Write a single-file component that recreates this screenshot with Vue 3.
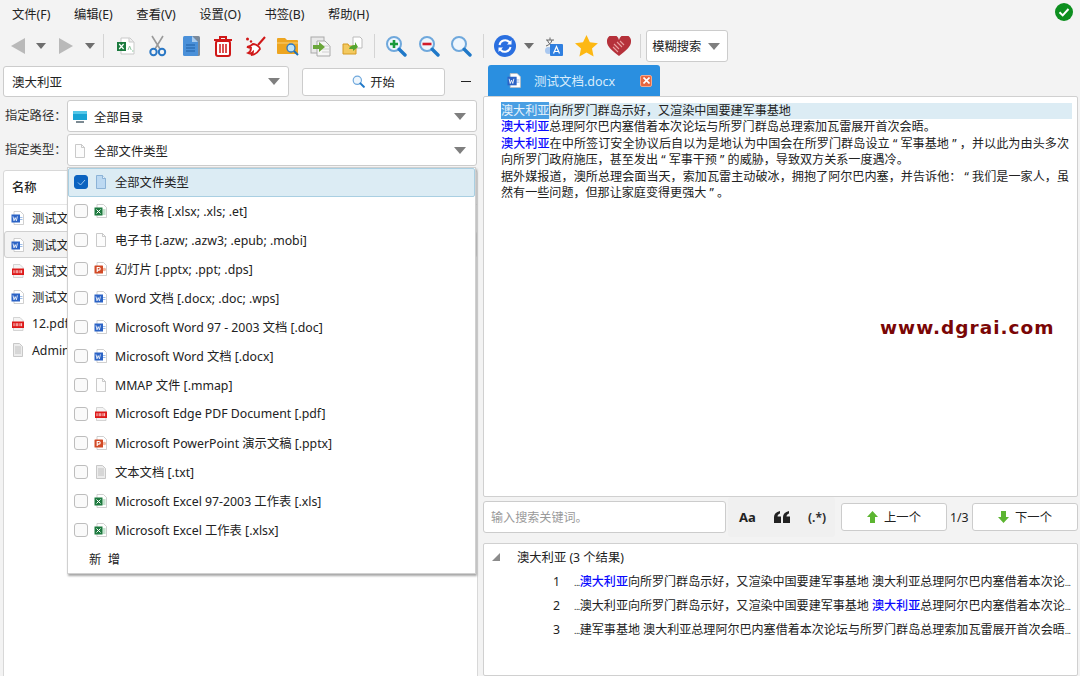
<script setup>
const menus = ['文件(F)', '编辑(E)', '查看(V)', '设置(O)', '书签(B)', '帮助(H)']

const files = [
  { name: '测试文档.docx', icon: 'word' },
  { name: '测试文档.docx', icon: 'word', active: true },
  { name: '测试文档.pdf', icon: 'pdf' },
  { name: '测试文档.docx', icon: 'word' },
  { name: '12.pdf', icon: 'pdf' },
  { name: 'Administrator.txt', icon: 'text' }
]

const types = [
  { name: '全部文件类型', icon: 'blue', checked: true },
  { name: '电子表格 [.xlsx; .xls; .et]', icon: 'excel' },
  { name: '电子书 [.azw; .azw3; .epub; .mobi]', icon: 'blank' },
  { name: '幻灯片 [.pptx; .ppt; .dps]', icon: 'ppt' },
  { name: 'Word 文档 [.docx; .doc; .wps]', icon: 'word' },
  { name: 'Microsoft Word 97 - 2003 文档 [.doc]', icon: 'word' },
  { name: 'Microsoft Word 文档 [.docx]', icon: 'word' },
  { name: 'MMAP 文件 [.mmap]', icon: 'blank' },
  { name: 'Microsoft Edge PDF Document [.pdf]', icon: 'pdf' },
  { name: 'Microsoft PowerPoint 演示文稿 [.pptx]', icon: 'ppt' },
  { name: '文本文档 [.txt]', icon: 'text' },
  { name: 'Microsoft Excel 97-2003 工作表 [.xls]', icon: 'excel' },
  { name: 'Microsoft Excel 工作表 [.xlsx]', icon: 'excel' }
]

const results = [
  { n: 1, pre: '', hit: '澳大利亚', post: '向所罗门群岛示好，又渲染中国要建军事基地 澳大利亚总理阿尔巴内塞借着本次论' },
  { n: 2, pre: '澳大利亚向所罗门群岛示好，又渲染中国要建军事基地 ', hit: '澳大利亚', post: '总理阿尔巴内塞借着本次论' },
  { n: 3, pre: '建军事基地 澳大利亚总理阿尔巴内塞借着本次论坛与所罗门群岛总理索加瓦雷展开首次会晤', hit: '', post: '' }
]
</script>

<template>
  <div class="app">
    <svg class="defs" width="0" height="0">
      <symbol id="f-word" viewBox="0 0 14 14">
        <path d="M3 .5h6.5L12.5 3.5v10H3z" fill="#fff" stroke="#bbb" stroke-width=".7" />
        <rect x="8" y="6" width="3.500" height="1" fill="#9dbde8" /><rect x="8" y="8" width="3.500" height="1" fill="#9dbde8" />
        <rect x=".5" y="3.500" width="8.500" height="8" fill="#2b63c6" />
        <path d="M2 5.400l1 4.400 1.200-3.200 1.200 3.200 1-4.400" fill="none" stroke="#fff" stroke-width=".8" />
      </symbol>
      <symbol id="f-excel" viewBox="0 0 14 14">
        <path d="M3 .5h6.500L12.500 3.500v10H3z" fill="#fff" stroke="#bbb" stroke-width=".7" />
        <rect x="8.500" y="5.500" width="3" height="1" fill="#8cc79f" /><rect x="8.500" y="7.500" width="3" height="1" fill="#8cc79f" /><rect x="8.500" y="9.500" width="3" height="1" fill="#8cc79f" />
        <rect x=".5" y="3.500" width="8" height="8" fill="#1d7a3f" />
        <path d="M2.500 5.500l4 4M6.500 5.500l-4 4" stroke="#fff" stroke-width="1" />
      </symbol>
      <symbol id="f-ppt" viewBox="0 0 14 14">
        <path d="M3 .5h6.500L12.500 3.500v10H3z" fill="#fff" stroke="#bbb" stroke-width=".7" />
        <circle cx="10.300" cy="7.500" r="1.800" fill="#f0b9a4" />
        <rect x=".5" y="3.500" width="8.500" height="8" rx=".6" fill="#d24a26" />
        <path d="M3.200 10V5.500h1.700a1.300 1.300 0 010 2.600H3.200" fill="none" stroke="#fff" stroke-width="1.100" />
      </symbol>
      <symbol id="f-pdf" viewBox="0 0 14 14">
        <path d="M2.500.5h6.500L12 3.500v10H2.500z" fill="#f4f4f4" stroke="#c4c4c4" stroke-width=".7" />
        <rect x="1" y="4.500" width="12" height="6.500" fill="#dd1a1a" />
        <path d="M3 6.200v3M5.200 6.200v3M6.800 6.200v3M9 6.200v3M10.600 6.200v3" stroke="#fbd5d5" stroke-width="1" />
      </symbol>
      <symbol id="f-blank" viewBox="0 0 14 14">
        <path d="M2.500.5h6L11.500 3.500v10h-9z" fill="#fcfcfc" stroke="#bdbdbd" stroke-width=".8" />
        <path d="M8.500.5v3h3" fill="none" stroke="#bdbdbd" stroke-width=".8" />
      </symbol>
      <symbol id="f-blue" viewBox="0 0 14 14">
        <path d="M2.500.5h6L11.500 3.500v10h-9z" fill="#bcd9f2" stroke="#7ba7cf" stroke-width=".8" />
        <path d="M8.500.5v3h3" fill="#e6f1fa" stroke="#7ba7cf" stroke-width=".8" />
      </symbol>
      <symbol id="f-text" viewBox="0 0 14 14">
        <path d="M2.500.5h6L11.500 3.500v10h-9z" fill="#ececec" stroke="#bdbdbd" stroke-width=".8" />
        <path d="M4 4h6M4 6h6M4 8h6M4 10h6" stroke="#bdbdbd" stroke-width=".9" />
      </symbol>
      <symbol id="mag" viewBox="0 0 22 22">
        <circle cx="9" cy="9" r="7" fill="#eef6fd" stroke="#6fa8dc" stroke-width="2" />
        <path d="M14.200 14.200L20 20" stroke="#1f78c8" stroke-width="3.400" stroke-linecap="round" />
      </symbol>
    </svg>

    <header class="menubar">
      <span v-for="m in menus" :key="m">{{ m }}</span>
      <svg class="ok" width="18" height="18" viewBox="0 0 18 18">
        <circle cx="9" cy="9" r="9" fill="#0d8f1f" />
        <path d="M4.500 9.200l3.200 3.200 5.800-6.400" fill="none" stroke="#fff" stroke-width="2" />
      </svg>
    </header>

    <div class="toolbar">
      <span class="tool nav"><i class="tri-left"></i></span>
      <span class="tool drop"><i class="caret"></i></span>
      <span class="tool nav wide"><i class="tri-right"></i></span>
      <span class="tool drop"><i class="caret"></i></span>
      <i class="sep first"></i>

      <span class="tool">
        <svg width="20" height="20" viewBox="0 0 20 20">
          <path d="M5 2h9l4 4v12H5z" fill="#fff" stroke="#c9c9c9" />
          <path d="M13 2v4h5" fill="#eee" stroke="#c9c9c9" />
          <rect x="1" y="6" width="9" height="9" fill="#1b7a3e" />
          <path d="M3.200 8l4.400 5M7.600 8l-4.400 5" stroke="#fff" stroke-width="1.200" />
          <path d="M12 14l1.600-4 1.600 4M16 15h1.500" fill="none" stroke="#8cc79f" />
        </svg>
      </span>
      <span class="tool">
        <svg width="18" height="22" viewBox="0 0 18 22">
          <path d="M3 1l8 13M14 1L6 14" stroke="#9a9a9a" stroke-width="1.600" />
          <circle cx="4.500" cy="17" r="3.200" fill="none" stroke="#2b78c5" stroke-width="2" />
          <circle cx="13" cy="17" r="3.200" fill="none" stroke="#2b78c5" stroke-width="2" />
        </svg>
      </span>
      <span class="tool">
        <svg width="20" height="22" viewBox="0 0 20 22">
          <rect x="4" y="1" width="15" height="20" rx="1.500" fill="#7b8a9a" />
          <path d="M2 2.500a1.500 1.500 0 011.500-1.500H11l6 6v12.500a1.500 1.500 0 01-1.500 1.500h-12A1.500 1.500 0 012 19.500z" fill="#4a90d9" />
          <path d="M11 1v6h6z" fill="#a8cbee" />
          <path d="M5 10h9M5 13h9M5 16h9" stroke="#1f5fa5" />
        </svg>
      </span>
      <span class="tool">
        <svg width="20" height="22" viewBox="0 0 20 22">
          <path d="M1 5h18M7 5V2h6v3" fill="none" stroke="#d01818" stroke-width="2" />
          <rect x="3" y="6" width="14" height="15" rx="2" fill="#fff" stroke="#d01818" stroke-width="2" />
          <path d="M7 9v9M10 9v9M13 9v9" stroke="#d01818" stroke-width="1.500" />
        </svg>
      </span>
      <span class="tool">
        <svg width="22" height="22" viewBox="0 0 22 22">
          <path d="M20 2l-7 8" stroke="#d01818" stroke-width="2" />
          <path d="M8 9c3 0 7 3 7 5-2 3-5 6-9 6 2-1 2-2 2-3-1 1-3 2-5 1 2-1 3-3 3-5-1 0-2 0-4-1 3 0 5-2 6-3z" fill="#fff" stroke="#d01818" stroke-width="1.800" />
          <circle cx="2.500" cy="4" r="1.500" fill="#d01818" /><circle cx="6" cy="6.500" r="1.200" fill="#d01818" />
        </svg>
      </span>
      <span class="tool">
        <svg width="22" height="20" viewBox="0 0 22 20">
          <path d="M0 3a1 1 0 011-1h7l2 2h10a1 1 0 011 1v12a1 1 0 01-1 1H1a1 1 0 01-1-1z" fill="#eda520" />
          <path d="M0 7h21" stroke="#fad27a" />
          <circle cx="14" cy="12" r="4" fill="#bfe4f7" stroke="#2b78c5" stroke-width="1.300" />
          <path d="M17 15l4 4" stroke="#1f6fb5" stroke-width="2" />
        </svg>
      </span>
      <span class="tool">
        <svg width="21" height="21" viewBox="0 0 21 21">
          <rect x="1" y="1" width="13" height="16" fill="#e9e9e9" stroke="#a9a9a9" />
          <path d="M7 5h8l5 5v10H7z" fill="#f6f6f6" stroke="#a9a9a9" />
          <path d="M12 10h8M12 13h8M12 16h8" stroke="#d0d0d0" />
          <path d="M3 9h6V6l6 5-6 5v-3H3z" fill="#6aa63a" />
        </svg>
      </span>
      <span class="tool">
        <svg width="21" height="20" viewBox="0 0 21 20">
          <path d="M11 1h7l2 2v9h-9z" fill="#fff" stroke="#bbb" />
          <path d="M1 8h5l1 2h7v8H1z" fill="#f3c95f" stroke="#d49a22" />
          <path d="M7 13h4v2l5-4-3-5v3c-3 0-5 1-6 4z" fill="#55a630" />
        </svg>
      </span>
      <i class="sep"></i>

      <span class="tool">
        <svg width="22" height="22"><use href="#mag" /><path d="M5 9h8M9 5v8" stroke="#189a3a" stroke-width="2.600" /></svg>
      </span>
      <span class="tool">
        <svg width="22" height="22"><use href="#mag" /><path d="M4.500 9h9" stroke="#d21c2a" stroke-width="2.600" /></svg>
      </span>
      <span class="tool">
        <svg width="22" height="22"><use href="#mag" /></svg>
      </span>
      <i class="sep"></i>

      <span class="tool">
        <svg width="22" height="22" viewBox="0 0 22 22">
          <circle cx="11" cy="11" r="11" fill="#2a6fe0" />
          <path d="M5.500 10a5.700 5.700 0 019.800-3l1.200 1.400M16.500 12a5.700 5.700 0 01-9.800 3l-1.200-1.400" fill="none" stroke="#fff" stroke-width="2" />
          <path d="M17.500 5v4.500H13zM4.500 17v-4.500H9z" fill="#fff" />
        </svg>
      </span>
      <span class="tool tiny"><i class="caret"></i></span>
      <span class="tool gapped">
        <svg width="19" height="20" viewBox="0 0 19 20">
          <path d="M2 4h8M6 1.500V4M3.500 4c.5 3 3 5 6 6M8 4c-.5 3-3 5-6 6" fill="none" stroke="#666" stroke-width="1" />
          <circle cx="4.500" cy="14.500" r="3.500" fill="#a9c8f0" />
          <rect x="6" y="8" width="13" height="12" rx="1" fill="#2f7fe0" />
          <path d="M9.500 17.500l3-7 3 7M10.500 15.500h4" fill="none" stroke="#fff" stroke-width="1.200" />
        </svg>
      </span>
      <span class="tool">
        <svg width="23" height="22" viewBox="0 0 23 22">
          <path d="M11.500 0l3.400 7.300 8 .9-5.900 5.400 1.600 7.900-7.100-4-7.100 4 1.600-7.900L0 8.200l8-.9z" fill="#fdb813" />
        </svg>
      </span>
      <span class="tool">
        <svg width="24" height="20" viewBox="0 0 24 20">
          <path d="M12 20C6 15 0 11 0 6a6 6 0 0112-2 6 6 0 0112 2c0 5-6 9-12 14z" fill="#b5313a" />
          <path d="M7 8l5 5M10 6l5 5M13 5l4 4M6 11l5 5" stroke="#e9a0a0" stroke-width="1.100" />
        </svg>
      </span>
      <i class="sep"></i>

      <div class="mode">模糊搜索<i class="caret big"></i></div>
    </div>

    <main class="main">
      <section class="left">
        <div class="search-row">
          <div class="box keyword">澳大利亚<i class="caret big"></i></div>
          <button class="start">
            <svg width="13" height="13"><use href="#mag" /></svg>
            开始
          </button>
          <span class="dash"></span>
        </div>

        <div class="field">
          <label>指定路径：</label>
          <div class="box picker">
            <svg width="14" height="14" viewBox="0 0 14 14">
              <rect y="1" width="14" height="9" fill="#18a3d4" />
              <rect y="1" width="14" height="3" fill="#54c7e8" />
              <rect x="3" y="11" width="8" height="2" fill="#7c8a92" />
            </svg>
            <span>全部目录</span><i class="caret big"></i>
          </div>
        </div>
        <div class="field">
          <label>指定类型：</label>
          <div class="box picker">
            <svg width="14" height="14"><use href="#f-blank" /></svg>
            <span>全部文件类型</span><i class="caret big"></i>
          </div>
        </div>

        <div class="file-list">
          <div class="list-head">名称</div>
          <div v-for="(f, i) in files" :key="i" class="file" :class="{ active: f.active }">
            <svg width="14" height="14"><use :href="'#f-' + f.icon" /></svg>
            <span>{{ f.name }}</span>
          </div>
        </div>

        <div class="type-menu">
          <div v-for="t in types" :key="t.name" class="type" :class="{ on: t.checked }">
            <i class="check"><svg v-if="t.checked" width="9" height="9" viewBox="0 0 9 9"><path d="M1 4.500l2.500 2.500L8 2" fill="none" stroke="#9cc6ee" stroke-width="1" /></svg></i>
            <svg width="14" height="14"><use :href="'#f-' + t.icon" /></svg>
            <span>{{ t.name }}</span>
          </div>
          <div class="type add">新&nbsp;&nbsp;增</div>
        </div>
      </section>

      <section class="right">
        <div class="tab">
          <svg width="15" height="15"><use href="#f-word" /></svg>
          <span>测试文档.docx</span>
          <i class="tab-close">
            <svg width="7" height="7" viewBox="0 0 7 7"><path d="M.5.5l6 6M6.500.5l-6 6" stroke="#fff" stroke-width="1.600" /></svg>
          </i>
        </div>

        <article class="doc">
          <p class="first"><mark class="sel">澳大利亚</mark>向所罗门群岛示好，又渲染中国要建军事基地</p>
          <p><b>澳大利亚</b>总理阿尔巴内塞借着本次论坛与所罗门群岛总理索加瓦雷展开首次会晤。</p>
          <p><b>澳大利亚</b>在中所签订安全协议后自以为是地认为中国会在所罗门群岛设立 “ 军事基地 ” ，并以此为由头多次向所罗门政府施压，甚至发出 “ 军事干预 ” 的威胁，导致双方关系一度遇冷。</p>
          <p>据外媒报道，澳所总理会面当天，索加瓦雷主动破冰，拥抱了阿尔巴内塞，并告诉他： “ 我们是一家人，虽然有一些问题，但那让家庭变得更强大 ” 。</p>
        </article>

        <div class="find-row">
          <div class="box find-input">输入搜索关键词。</div>
          <div class="switches">
            <span class="aa">Aa</span>
            <svg width="16" height="12" viewBox="0 0 16 12">
              <path d="M0 12V6c0-3 2-5 6-6v2.500C4.500 3 3.500 4 3.500 5.500H7V12zM9 12V6c0-3 2-5 6-6v2.500c-1.500.5-2.500 1.500-2.500 3H16V12z" fill="#222" />
            </svg>
            <span class="regex">(.*)</span>
          </div>
          <button class="step">
            <svg width="11" height="12" viewBox="0 0 11 12"><path d="M5.500 0L11 6H8v6H3V6H0z" fill="#5cb531" /></svg>
            上一个
          </button>
          <span class="count">1/3</span>
          <button class="step">
            <svg width="11" height="12" viewBox="0 0 11 12"><path d="M5.500 12L0 6h3V0h5v6h3z" fill="#5cb531" /></svg>
            下一个
          </button>
        </div>

        <div class="results">
          <div class="result-head"><i class="corner"></i>澳大利亚 (3 个结果)</div>
          <div v-for="r in results" :key="r.n" class="result">
            <span class="num">{{ r.n }}</span>
            <span class="line"><small class="dots">...</small>{{ r.pre }}<b>{{ r.hit }}</b>{{ r.post }}<small class="dots">...</small></span>
          </div>
        </div>
      </section>
    </main>

    <div class="watermark">www.dgrai.com</div>
  </div>
</template>

<style scoped>
.app {
  position: relative;
  width: 1080px;
  height: 676px;
  overflow: hidden;
  display: flex;
  flex-direction: column;
  background: #f3f3f3;
  color: #222;
  font-family: "Noto Sans", "Noto Sans CJK SC", sans-serif;
  font-size: 12.3px;
}
.defs {
  position: absolute;
}
.menubar {
  height: 28px;
  flex: none;
  display: flex;
  align-items: center;
  gap: 23.600px;
  padding: 0 7px 0 12px;
}
.ok {
  margin-left: auto;
  margin-top: -4px;
}
.toolbar {
  height: 36px;
  flex: none;
  display: flex;
  align-items: center;
  padding-left: 7px;
}
.tool {
  width: 32.4px;
  height: 26px;
  flex: none;
  display: flex;
  align-items: center;
  justify-content: center;
}
.tool.nav {
  width: 22px;
}
.tool.nav.wide {
  width: 25px;
  margin-left: 1px;
}
.tool.drop {
  width: 23px;
}
.tool.tiny {
  width: 15px;
}
.tool.gapped {
  margin-left: 1.600px;
}
.sep {
  width: 1px;
  height: 24px;
  flex: none;
  margin: 0 4.800px 0 5.500px;
  background: #d4d4d4;
}
.sep.first {
  margin: 0 5.800px 0 2px;
}
.tri-left,
.tri-right {
  width: 0;
  height: 0;
  border-top: 8px solid transparent;
  border-bottom: 8px solid transparent;
}
.tri-left {
  border-right: 14px solid #b9b9b9;
}
.tri-right {
  border-left: 14px solid #b9b9b9;
}
.caret {
  width: 0;
  height: 0;
  flex: none;
  border-left: 5.500px solid transparent;
  border-right: 5.500px solid transparent;
  border-top: 6px solid #6e6e6e;
}
.caret.big {
  margin-left: auto;
  border-left-width: 6.500px;
  border-right-width: 6.500px;
  border-top-width: 7px;
  border-top-color: #7f7f7f;
}
.mode {
  width: 82px;
  height: 32px;
  box-sizing: border-box;
  display: flex;
  align-items: center;
  padding: 0 7px 0 5px;
  background: #fff;
  border: 1px solid #ccc;
  border-radius: 3px;
}

.main {
  flex: 1;
  min-height: 0;
  display: flex;
}
.left {
  position: relative;
  width: 483px;
  flex: none;
  padding: 2px 0 0 3px;
  box-sizing: border-box;
}
.box {
  box-sizing: border-box;
  display: flex;
  align-items: center;
  background: #fff;
  border: 1px solid #ccc;
  border-radius: 3px;
}
.search-row {
  display: flex;
  align-items: center;
  height: 31px;
}
.keyword {
  width: 286px;
  height: 31px;
  padding: 0 8px;
  font-size: 12.500px;
}
.start {
  width: 143px;
  height: 28px;
  margin-left: 13px;
  display: flex;
  align-items: center;
  justify-content: center;
  gap: 5px;
  padding: 0;
  background: #fff;
  border: 1px solid #ccc;
  border-radius: 3px;
  color: #222;
  font: inherit;
}
.dash {
  width: 10px;
  height: 1px;
  margin-left: 16px;
  background: #222;
}
.field {
  display: flex;
  align-items: center;
  height: 32px;
  margin-top: 2px;
}
.search-row + .field {
  margin-top: 3px;
}
.field label {
  width: 64px;
  padding: 0 0 2px 2px;
  box-sizing: border-box;
  flex: none;
  color: #333;
}
.picker {
  width: 410px;
  height: 32px;
  padding: 1px 10px 0 5px;
  gap: 7px;
}
.file-list {
  margin-top: 4px;
  width: 475px;
  height: 510px;
  box-sizing: border-box;
  background: #fff;
  border: 1px solid #d8d8d8;
  border-radius: 3px 3px 0 0;
}
.list-head {
  height: 33px;
  line-height: 33px;
  padding-left: 8px;
  font-weight: 500;
  border-bottom: 1px solid #e6e6e6;
}
.file {
  height: 26.400px;
  box-sizing: border-box;
  display: flex;
  align-items: center;
  gap: 7px;
  padding-left: 7px;
  white-space: nowrap;
}
.file.active {
  background: #f3f3f3;
  border: 1px solid #d0d0d0;
  border-radius: 3px;
  padding-left: 6px;
}

.type-menu {
  position: absolute;
  left: 67px;
  top: 103px;
  width: 409px;
  box-sizing: border-box;
  background: #fff;
  border: 1px solid #d0d0d0;
  box-shadow: 1px 2px 2px #a8a8a8;
}
.type {
  height: 28.950px;
  box-sizing: border-box;
  display: flex;
  align-items: center;
  padding-left: 6px;
  white-space: nowrap;
}
.type.on {
  background: #dcecf4;
  border: 1px solid #a9cfe2;
  border-radius: 2px;
  padding-left: 5px;
}
.type.add {
  padding-left: 21px;
}
.check {
  width: 12px;
  height: 12px;
  flex: none;
  display: flex;
  align-items: center;
  justify-content: center;
  margin-right: 6px;
  background: #fafafa;
  border: 1px solid #bdbdbd;
  border-radius: 3px;
}
.type.on .check {
  background: #0b63c0;
  border-color: #0b63c0;
}
.type svg + span {
  margin-left: 7px;
}

.right {
  flex: 1;
  min-width: 0;
  display: flex;
  flex-direction: column;
  padding: 1px 2px 0 0;
}
.tab {
  width: 172px;
  height: 31px;
  flex: none;
  margin-left: 5px;
  display: flex;
  align-items: center;
  padding-left: 19px;
  box-sizing: border-box;
  background: #2a8fe0;
  border-radius: 3px 3px 0 0;
  color: #d8ecfb;
  font-size: 12.500px;
}
.tab span {
  margin-left: 12px;
}
.tab-close {
  width: 12px;
  height: 12px;
  margin-left: auto;
  margin-right: 8px;
  display: flex;
  align-items: center;
  justify-content: center;
  background: #e8673f;
  border: 1px solid #f2a98f;
  box-sizing: border-box;
  border-radius: 2px;
}
.doc {
  height: 401px;
  flex: none;
  box-sizing: border-box;
  padding: 6px 8px 0 17px;
  background: #fff;
  border: 1px solid #d0d0d0;
  border-radius: 2px;
  font-size: 12.080px;
  line-height: 16.400px;
  text-align: justify;
}
.doc p {
  margin: 0;
}
.doc .first {
  margin-right: -3px;
  background: #dcecf4;
}
.doc b,
.line b {
  font-weight: 500;
  color: #0a0aff;
}
.sel {
  background: #4a9fe3;
  color: #e8f3fb;
}
.find-row {
  height: 40px;
  flex: none;
  display: flex;
  align-items: center;
}
.find-input {
  width: 244px;
  height: 32px;
  padding-left: 7px;
  color: #9a9a9a;
  font-size: 12.080px;
}
.switches {
  width: 107px;
  height: 40px;
  margin-left: 2px;
  flex: none;
  display: flex;
  align-items: center;
  justify-content: space-between;
  padding: 0 9px 0 11px;
  box-sizing: border-box;
  background: #f0f0f0;
  border-radius: 3px;
}
.aa {
  font-weight: 700;
  font-size: 13px;
}
.regex {
  font-weight: 700;
  font-size: 12px;
  color: #333;
}
.step {
  width: 106px;
  height: 28px;
  flex: none;
  display: flex;
  align-items: center;
  justify-content: center;
  gap: 6px;
  padding: 0;
  margin-left: 6px;
  background: #fff;
  border: 1px solid #ccc;
  border-radius: 3px;
  color: #222;
  font: inherit;
}
.count {
  width: 25px;
  flex: none;
  padding-left: 3px;
  box-sizing: border-box;
  white-space: nowrap;
}
.count + .step {
  margin-left: 0;
}
.results {
  flex: 1;
  min-height: 0;
  margin-top: 6px;
  box-sizing: border-box;
  background: #fff;
  border: 1px solid #d0d0d0;
  border-radius: 2px;
}
.result-head {
  height: 25px;
  display: flex;
  align-items: center;
  padding-left: 8px;
  box-sizing: border-box;
}
.corner {
  width: 0;
  height: 0;
  margin-right: 17px;
  border-left: 8px solid transparent;
  border-bottom: 8px solid #8c8c8c;
}
.result {
  height: 24px;
  display: flex;
  align-items: center;
}
.num {
  width: 90px;
  flex: none;
  text-align: right;
  padding-right: 14px;
  box-sizing: border-box;
}
.line {
  flex: 1;
  min-width: 0;
  font-size: 12.050px;
  white-space: nowrap;
}
.dots {
  font-size: 9px;
  letter-spacing: -.5px;
}
.watermark {
  position: absolute;
  left: 880px;
  top: 317px;
  font-family: "DejaVu Sans", sans-serif;
  font-weight: 700;
  font-size: 18.500px;
  letter-spacing: 1px;
  color: #7a0606;
}
</style>
